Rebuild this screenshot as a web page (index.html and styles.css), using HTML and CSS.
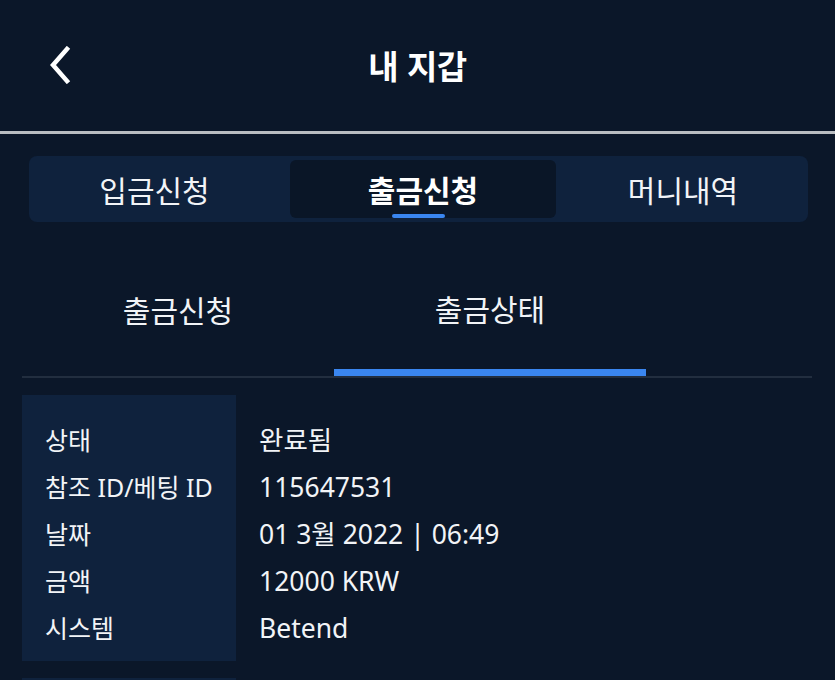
FILE: index.html
```html
<!DOCTYPE html>
<html lang="ko">

<head>
    <meta charset="utf-8">
    <meta name="viewport" content="width=device-width, initial-scale=1">
    <title>내 지갑</title>
    <link rel="stylesheet" href="styles.css">
</head>

<body>
    <header class="topbar">
        <a href="#" class="back-btn" aria-label="뒤로">
            <svg width="24" height="38" viewBox="0 0 24 38">
                <path d="M19 3 L5 19 L19 35" fill="none" stroke="#fff" stroke-width="4.5" stroke-linecap="square" stroke-linejoin="miter"/>
            </svg>
        </a>
        <h1 class="title">내 지갑</h1>
    </header>

    <div class="segment">
        <div class="segment-item">입금신청</div>
        <div class="segment-item active">출금신청</div>
        <div class="segment-item">머니내역</div>
    </div>

    <div class="tabs">
        <div class="tab">출금신청</div>
        <div class="tab active">출금상태</div>
    </div>

    <div class="detail">
        <div class="detail-labels">
            <div class="row">상태</div>
            <div class="row">참조 ID/베팅 ID</div>
            <div class="row">날짜</div>
            <div class="row">금액</div>
            <div class="row">시스템</div>
        </div>
        <div class="detail-values">
            <div class="row">완료됨</div>
            <div class="row">115647531</div>
            <div class="row">01 3월 2022 | 06:49</div>
            <div class="row">12000 KRW</div>
            <div class="row">Betend</div>
        </div>
    </div>

    <!-- next record, only its top edge is on screen -->
    <div class="detail">
        <div class="detail-labels empty"></div>
    </div>
</body>

</html>
```

FILE: styles.css
```css
html,
body {
    margin: 0;
    padding: 0;
}

body {
    background-color: #0b1729;
    color: #ffffff;
    font-family: "Noto Sans", "Noto Sans CJK KR", sans-serif;
    width: 835px;
    height: 680px;
    overflow: hidden;
}

.topbar {
    position: relative;
    height: 131px;
    display: flex;
    align-items: center;
    justify-content: center;
    border-bottom: 3px solid #b9bdc1;
}

.back-btn {
    position: absolute;
    left: 48px;
    top: 46px;
    display: block;
    line-height: 0;
}

.title {
    margin: 0;
    font-family: "Noto Sans CJK KR", sans-serif;
    font-size: 33px;
    font-weight: 700;
    letter-spacing: -0.5px;
    padding-bottom: 2px;
}

.segment {
    margin: 22px 27px 0 29px;
    height: 66px;
    padding: 4px;
    box-sizing: border-box;
    background-color: #0f223d;
    border-radius: 8px;
    display: grid;
    grid-template-columns: 257px 266px 1fr;
}

.segment-item {
    display: flex;
    align-items: center;
    justify-content: center;
    font-family: "Noto Sans CJK KR", sans-serif;
    font-size: 30px;
    color: #f2f4f7;
    position: relative;
}

.segment-item:first-child {
    padding-right: 14px;
}

.segment-item:last-child {
    padding-left: 6px;
}

.segment-item.active {
    background-color: #0a1627;
    border-radius: 6px;
    font-weight: 700;
    color: #ffffff;
}

.segment-item.active::after {
    content: "";
    position: absolute;
    left: 102px;
    bottom: 0;
    width: 53px;
    height: 4px;
    border-radius: 2px;
    background-color: #3a86f0;
}

.tabs {
    margin: 24px 23px 0 22px;
    display: flex;
    border-bottom: 2px solid #222e3f;
}

.tab {
    width: 312px;
    height: 130px;
    display: flex;
    align-items: center;
    justify-content: center;
    font-family: "Noto Sans CJK KR", sans-serif;
    font-size: 30px;
    color: #f2f4f7;
    box-sizing: border-box;
    padding-bottom: 4px;
}

.tab.active {
    border-bottom: 7px solid #3a86f0;
    margin-bottom: -1px;
    padding-bottom: 0;
}

.detail {
    margin: 17px 0 0 22px;
    display: flex;
}

.detail-labels {
    width: 214px;
    background-color: #0f223d;
    padding: 22px 0 9px 23px;
    box-sizing: border-box;
}

.detail-labels.empty {
    height: 120px;
}

.detail-values {
    padding: 22px 0 9px 23px;
}

.detail-values .row {
    font-size: 26.5px;
}

.row {
    height: 47px;
    line-height: 47px;
    font-size: 25px;
    color: #f2f4f7;
    white-space: nowrap;
}
```
